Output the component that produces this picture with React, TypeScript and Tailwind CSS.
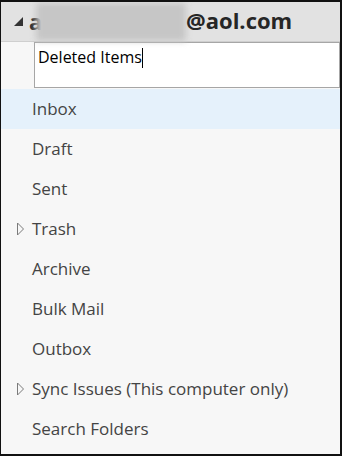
import React from "react";

const font = { fontFamily: '"Open Sans", "Noto Sans", sans-serif' };

function Hollow() {
  return (
    <svg width="9" height="14" viewBox="0 0 9 14" className="absolute left-[15px] top-[13px]">
      <path d="M1.5 1 L7.5 7 L1.5 13 Z" fill="none" stroke="#7a7a7a" strokeWidth="1" />
    </svg>
  );
}

const items: { name: string; arrow?: boolean; sel?: boolean }[] = [
  { name: "Inbox", sel: true },
  { name: "Draft" },
  { name: "Sent" },
  { name: "Trash", arrow: true },
  { name: "Archive" },
  { name: "Bulk Mail" },
  { name: "Outbox" },
  { name: "Sync Issues (This computer only)", arrow: true },
  { name: "Search Folders" },
];

export default function App() {
  return (
    <div className="w-[342px] h-[456px] bg-[#111] pt-[2px] pl-[1px] pr-[2px] pb-[2px]" style={font}>
      <div className="w-full h-full bg-[#f7f7f7] flex flex-col overflow-hidden">
        <div className="relative h-[40px] bg-[#e2e2e2] border-b border-[#cfcfcf] flex items-center shrink-0">
          <svg width="11" height="11" viewBox="0 0 11 11" className="absolute left-[12px] top-[14px]">
            <path d="M10 1 L10 10 L1 10 Z" fill="#333" />
          </svg>
          <span className="absolute left-[28px] top-[3px] text-[22px] font-bold text-[#2a2a2a]">a</span>
          <div className="absolute left-[35px] top-[1px] w-[150px] h-[38px] bg-[#c6c6c6] blur-[3px]" />
          <span className="absolute left-[185px] top-[2px] text-[22px] font-bold text-[#262626]">@aol.com</span>
        </div>
        <div className="h-[47px] flex shrink-0">
          <div className="w-[33px]" />
          <div className="flex-1 bg-white border border-[#a6a6a6] h-[46px] pl-[3px] pt-[2px] text-[16px] leading-[24px] text-black flex items-start">
            <span>Deleted Items</span>
            <span className="inline-block w-[1px] h-[20px] bg-black mt-[3px]" />
          </div>
        </div>
        {items.map((it) => (
          <div
            key={it.name}
            className={`relative h-[40px] shrink-0 flex items-center pl-[31px] text-[17px] text-[#444] ${it.sel ? "bg-[#e5f1fb]" : ""}`}
          >
            {it.arrow && <Hollow />}
            {it.name}
          </div>
        ))}
      </div>
    </div>
  );
}
